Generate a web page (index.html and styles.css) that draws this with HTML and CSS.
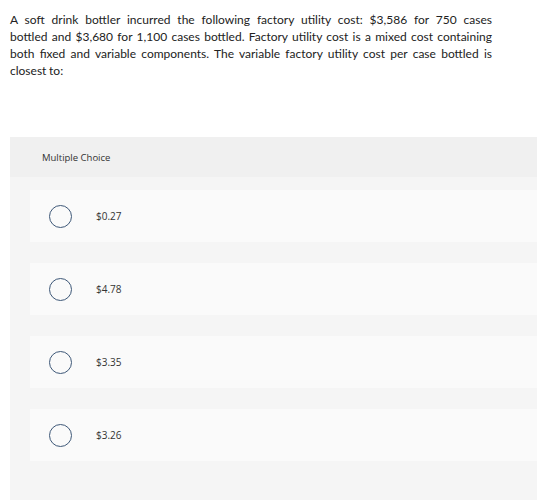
FILE: index.html
```html
<!DOCTYPE html>
<html>
<head>
<meta charset="utf-8">
<link rel="stylesheet" href="styles.css">
</head>
<body>
<div class="page">
  <p class="question"><span class="line">A soft drink bottler incurred the following factory utility cost: $3,586 for 750 cases</span> <span class="line">bottled and $3,680 for 1,100 cases bottled. Factory utility cost is a mixed cost containing</span> <span class="line">both fixed and variable components. The variable factory utility cost per case bottled is</span> <span class="line last">closest to:</span></p>
  <div class="panel">
    <div class="panel-head">Multiple Choice</div>
    <div class="options">
      <div class="option"><span class="radio"></span><span class="label">$0.27</span></div>
      <div class="option"><span class="radio"></span><span class="label">$4.78</span></div>
      <div class="option"><span class="radio"></span><span class="label">$3.35</span></div>
      <div class="option"><span class="radio"></span><span class="label">$3.26</span></div>
    </div>
  </div>
</div>
</body>
</html>
```
FILE: styles.css
```css
html, body {
  margin: 0;
  padding: 0;
  background: #ffffff;
}
.page {
  padding: 11px 0 0 10px;
  font-family: Lato, "Open Sans", "Liberation Sans", sans-serif;
  color: #222;
}
.question {
  margin: 0;
  width: 482px;
  font-size: 12px;
  line-height: 17px;
  word-spacing: -0.4px;
}
.line {
  display: block;
  white-space: nowrap;
  text-align: justify;
  text-align-last: justify;
}
.line.last {
  text-align-last: left;
}
.panel {
  margin-top: 58px;
  background: #f5f5f5;
  height: 363px;
}
.panel-head {
  background: #f0f0f0;
  height: 40px;
  display: flex;
  align-items: center;
  padding-left: 32px;
  font-size: 9.5px;
  color: #333;
  font-family: "Open Sans", sans-serif;
}
.options {
  padding: 13px 0 0 20px;
  display: flex;
  flex-direction: column;
  gap: 21px;
}
.option {
  background: #fafafa;
  height: 52px;
  display: flex;
  align-items: center;
}
.radio {
  width: 23px;
  height: 23px;
  border: 1.3px solid #3e5878;
  border-radius: 50%;
  margin-left: 19px;
  box-sizing: border-box;
}
.label {
  margin-left: 24px;
  font-size: 10px;
  color: #333;
  font-family: "Open Sans", sans-serif;
}
```
